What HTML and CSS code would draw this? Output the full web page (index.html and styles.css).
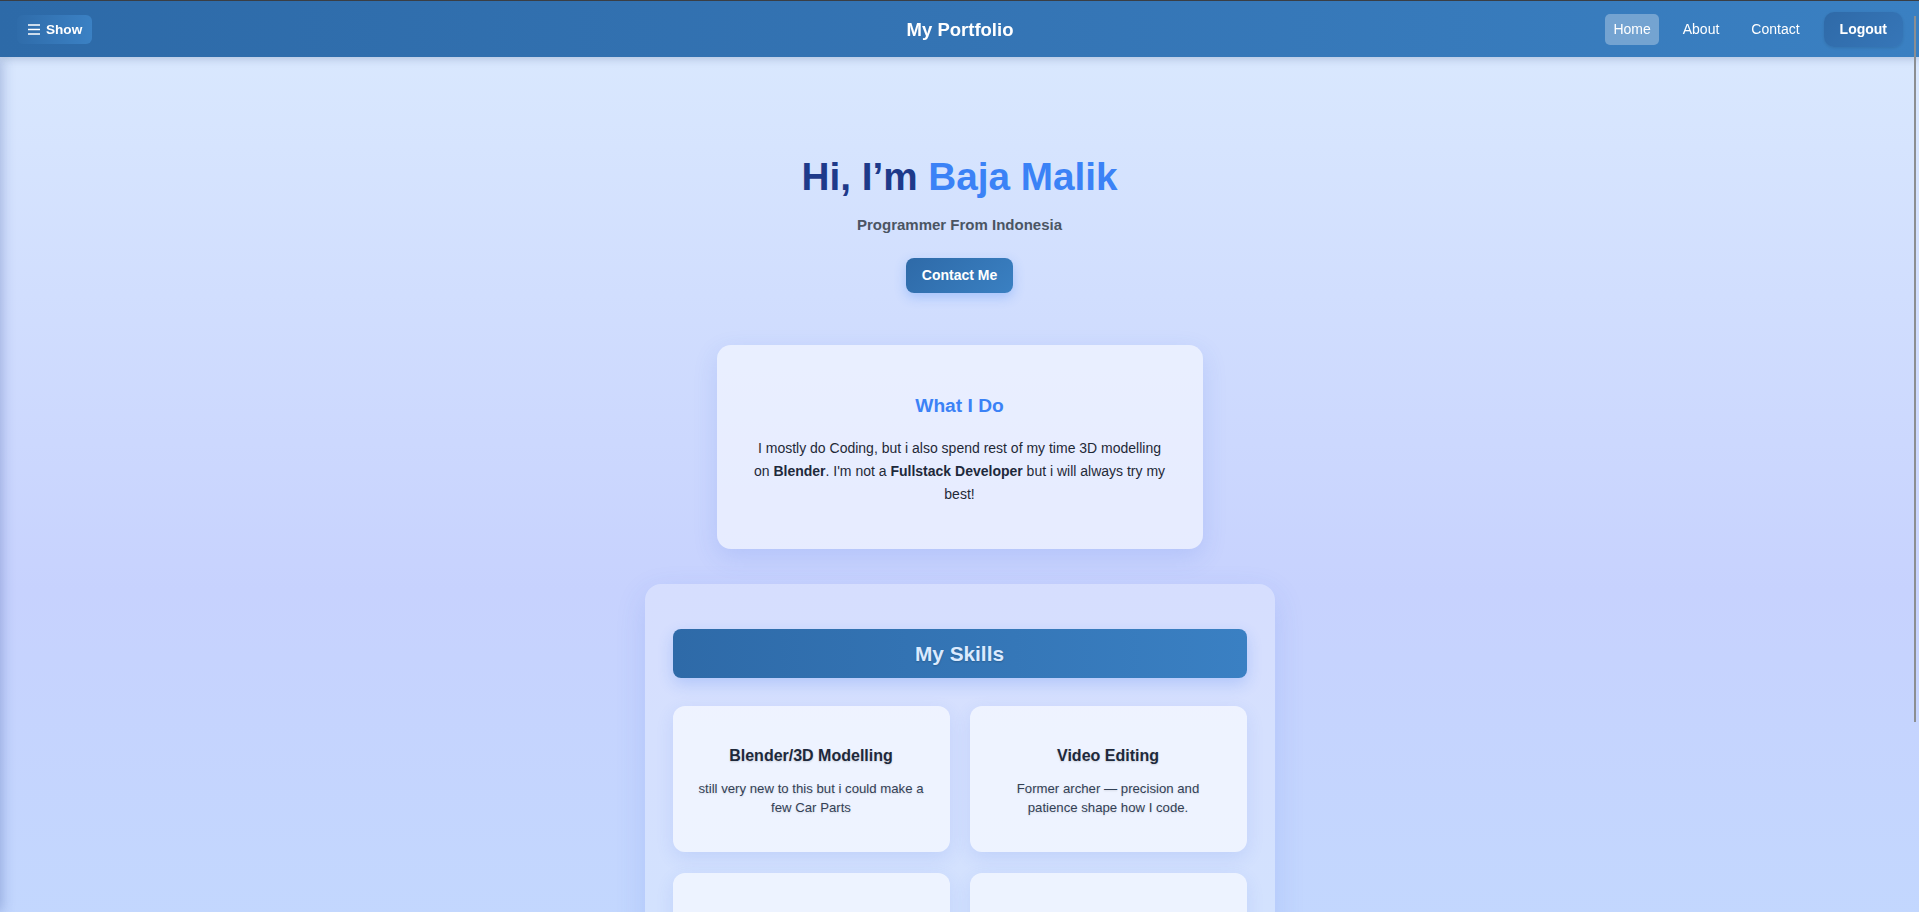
FILE: index.html
```html
<!DOCTYPE html>
<html lang="en">
<head>
<meta charset="utf-8">
<title>My Portfolio</title>
<link rel="stylesheet" href="styles.css">
</head>
<body>
<header class="topbar">
  <button class="menu-btn" type="button">
    <svg class="menu-icon" width="12" height="11" viewBox="0 0 12 11" aria-hidden="true">
      <path d="M0 1h12M0 5.5h12M0 10h12" stroke="#fff" stroke-width="1.3" fill="none"/>
    </svg>
    <span>Show</span>
  </button>
  <h1 class="brand">My Portfolio</h1>
  <nav class="topnav">
    <a class="nav-link active" href="#">Home</a>
    <a class="nav-link" href="#">About</a>
    <a class="nav-link" href="#">Contact</a>
    <button class="logout-btn" type="button">Logout</button>
  </nav>
</header>

<aside class="sidebar" aria-hidden="true"></aside>

<main class="page">
  <section class="hero">
    <h2 class="hero-title">Hi, I’m <span class="accent">Baja Malik</span></h2>
    <p class="hero-sub">Programmer From Indonesia</p>
    <a class="cta-btn" href="#">Contact Me</a>
  </section>

  <section class="about-card">
    <h3 class="about-title">What I Do</h3>
    <p class="about-text">I mostly do Coding, but i also spend rest of my time 3D modelling on <strong>Blender</strong>. I'm not a <strong>Fullstack Developer</strong> but i will always try my best!</p>
  </section>

  <section class="skills">
    <h2 class="skills-head">My Skills</h2>
    <div class="skills-grid">
      <div class="skill-card">
        <h4 class="skill-title">Blender/3D Modelling</h4>
        <p class="skill-text">still very new to this but i could make a few Car Parts</p>
      </div>
      <div class="skill-card">
        <h4 class="skill-title">Video Editing</h4>
        <p class="skill-text">Former archer — precision and patience shape how I code.</p>
      </div>
      <div class="skill-card">
        <h4 class="skill-title">Web Development</h4>
        <p class="skill-text">HTML, CSS and a bit of JavaScript for small projects.</p>
      </div>
      <div class="skill-card">
        <h4 class="skill-title">Programming</h4>
        <p class="skill-text">Learning new languages and tools every day.</p>
      </div>
    </div>
  </section>
</main>

<div class="scroll-thumb" aria-hidden="true"></div>
</body>
</html>
```

FILE: styles.css
```css
html {
  overflow: hidden;
}

body {
  margin: 0;
  border-top: 1px solid #3a3e44;
  font-family: "Liberation Sans", Arial, sans-serif;
  background: linear-gradient(180deg, #dbeafe 0%, #c7d2fe 50%, #bfdbfe 100%);
  color: #1f2937;
}

/* ---------- top bar ---------- */
.topbar {
  position: relative;
  z-index: 10;
  display: grid;
  grid-template-columns: 1fr auto 1fr;
  align-items: center;
  height: 56px;
  padding: 1px 16px 0 17px;
  box-sizing: border-box;
  background: linear-gradient(90deg, #2d6aa8 0%, #3474b4 50%, #3a80c2 100%);
  box-shadow: 0 2px 8px rgba(30, 58, 100, 0.22);
}

.menu-btn {
  justify-self: start;
  display: inline-flex;
  align-items: center;
  gap: 6px;
  height: 29px;
  padding: 0 10px 0 11px;
  border: 0;
  border-radius: 6px;
  background: linear-gradient(90deg, #2f6caa, #3b81c4);
  color: #fff;
  font-family: inherit;
  font-size: 13.6px;
  font-weight: bold;
  cursor: pointer;
}

.menu-icon {
  display: block;
}

.brand {
  margin: 0;
  font-size: 18.5px;
  font-weight: bold;
  color: #fff;
}

.topnav {
  justify-self: end;
  display: flex;
  align-items: center;
  gap: 16px;
}

.nav-link {
  padding: 7px 8px;
  border-radius: 5px;
  color: #fff;
  font-size: 14px;
  line-height: 17px;
  text-decoration: none;
}

.nav-link.active {
  background: rgba(255, 255, 255, 0.3);
}

.logout-btn {
  padding: 9px 16px;
  border: 0;
  border-radius: 10px;
  background: linear-gradient(135deg, #2f6aa8, #3676b8);
  box-shadow: 0 1px 3px rgba(0, 0, 0, 0.1);
  color: #fff;
  font-family: inherit;
  font-size: 14px;
  font-weight: bold;
  line-height: 17px;
  cursor: pointer;
}

/* ---------- off-canvas sidebar ---------- */
.sidebar {
  position: fixed;
  top: 57px;
  bottom: 0;
  left: 0;
  z-index: 5;
  width: 250px;
  background: #2f6aa8;
  transform: translateX(-100%);
  box-shadow: 2px 0 12px rgba(30, 58, 138, 0.28);
}

/* ---------- page ---------- */
.page {
  padding-bottom: 114px;
}

.hero {
  display: flex;
  flex-direction: column;
  align-items: center;
  padding-top: 97px;
  text-align: center;
}

.hero-title {
  margin: 0;
  font-size: 38.7px;
  line-height: 45px;
  font-weight: bold;
  color: #1e3a8a;
}

.accent {
  color: #3b82f6;
}

.hero-sub {
  margin: 17px 0 0;
  font-size: 15px;
  line-height: 17px;
  font-weight: bold;
  color: #4b5563;
}

.cta-btn {
  margin-top: 25px;
  padding: 9px 16px;
  border-radius: 8px;
  background: linear-gradient(135deg, #2e6aa8, #3a80c2);
  box-shadow: 0 4px 12px rgba(59, 130, 246, 0.3);
  color: #fff;
  font-size: 14px;
  line-height: 17px;
  font-weight: bold;
  text-decoration: none;
}

.about-card {
  box-sizing: border-box;
  width: 486px;
  margin: 52px auto 0;
  padding: 50px 36px 43px;
  border-radius: 14px;
  background: rgba(255, 255, 255, 0.55);
  box-shadow: 0 8px 24px rgba(59, 100, 220, 0.15);
  text-align: center;
}

.about-title {
  margin: 0 0 20px;
  font-size: 19.2px;
  line-height: 22px;
  color: #3b82f6;
}

.about-text {
  margin: 0;
  font-size: 14px;
  line-height: 23px;
  color: #1f2937;
}

.about-text strong {
  color: #1e293b;
}

.skills {
  box-sizing: border-box;
  width: 630px;
  margin: 35px auto 0;
  padding: 45px 28px;
  border-radius: 16px;
  background: rgba(255, 255, 255, 0.28);
  box-shadow: 0 10px 30px rgba(59, 100, 220, 0.15);
}

.skills-head {
  margin: 0 0 28px;
  padding: 12px;
  border-radius: 8px;
  background: linear-gradient(90deg, #2e6aa8, #3a80c3);
  box-shadow: 0 6px 16px rgba(37, 99, 235, 0.2);
  color: #dbeafe;
  font-size: 20.8px;
  line-height: 25px;
  text-align: center;
  text-shadow: 0 1px 2px rgba(0, 0, 0, 0.2);
}

.skills-grid {
  display: grid;
  grid-template-columns: 1fr 1fr;
  gap: 21px 20px;
}

.skill-card {
  box-sizing: border-box;
  min-height: 146px;
  padding: 41px 23px 35px;
  border-radius: 12px;
  background: rgba(255, 255, 255, 0.6);
  box-shadow: 0 6px 18px rgba(59, 100, 220, 0.12);
  text-align: center;
}

.skill-title {
  margin: 0 0 14px;
  font-size: 16px;
  line-height: 18.4px;
  color: #1e293b;
  text-shadow: 0 1px 2px rgba(0, 0, 0, 0.15);
}

.skill-text {
  margin: 0;
  font-size: 13.2px;
  line-height: 19px;
  color: #334155;
  text-shadow: 0 1px 2px rgba(0, 0, 0, 0.12);
}

/* overlay scroll indicator */
.scroll-thumb {
  position: fixed;
  top: 16px;
  right: 3px;
  z-index: 20;
  width: 2px;
  height: 706px;
  background: #8b8e92;
}
```
